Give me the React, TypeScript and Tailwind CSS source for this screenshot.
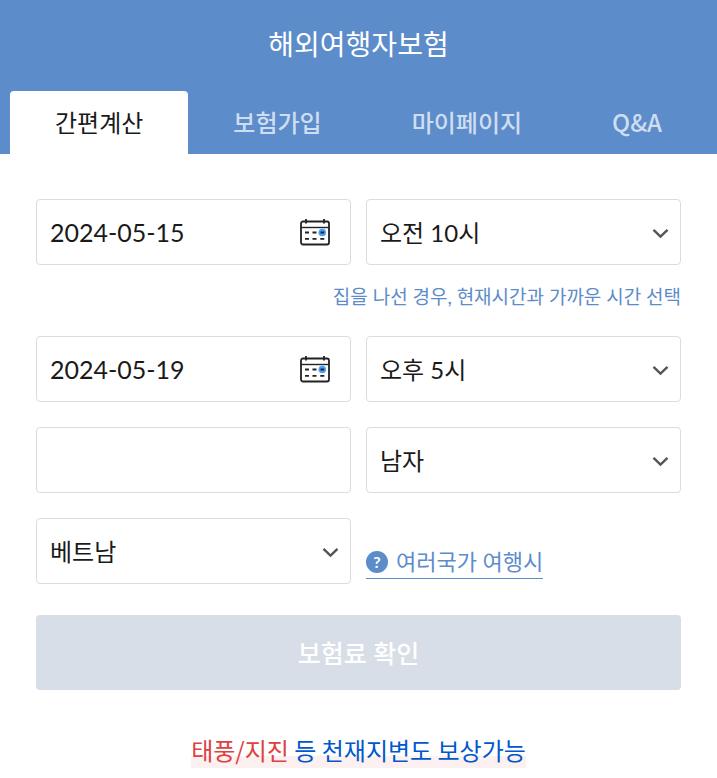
import React, { useState } from "react";

const tabs = ["간편계산", "보험가입", "마이페이지", "Q&A"];

const fieldClass =
  "block h-[66px] w-full appearance-none rounded border border-[#dcdcdc] bg-white pl-[13px] text-[#1a1a1a] outline-none";

const CalendarIcon = () => (
  <svg width="30" height="28" viewBox="0 0 30 28" fill="none">
    <circle cx="22.3" cy="14.5" r="3.8" fill="#45a0fb" />
    <rect x="1" y="3.5" width="28" height="23" rx="2" stroke="#222" strokeWidth="1.8" />
    <path d="M1 9.5h28" stroke="#222" strokeWidth="1.4" />
    <path d="M6 1v4.5M24 1v4.5" stroke="#222" strokeWidth="1.8" />
    <path
      d="M5 14.5h4M12.5 14.5h4M20.5 14.5h3.6M5 20.8h4M12.5 20.8h4M20.3 20.8h4"
      stroke="#222"
      strokeWidth="1.8"
    />
  </svg>
);

type DateFieldProps = { label: string; initial: string };

const DateField = ({ label, initial }: DateFieldProps) => {
  const [value, setValue] = useState(initial);
  return (
    <div className="relative">
      <input
        type="text"
        aria-label={label}
        className={`${fieldClass} text-[25px]`}
        value={value}
        onChange={(e) => setValue(e.target.value)}
      />
      <button
        type="button"
        aria-label={`${label} 달력`}
        className="absolute inset-y-0 right-[21px] flex items-center"
      >
        <CalendarIcon />
      </button>
    </div>
  );
};

type SelectFieldProps = { label: string; options: string[] };

const SelectField = ({ label, options }: SelectFieldProps) => (
  <div className="relative">
    <select aria-label={label} className={`${fieldClass} pt-0.5 text-2xl`}>
      {options.map((option) => (
        <option key={option}>{option}</option>
      ))}
    </select>
    <svg
      className="pointer-events-none absolute inset-y-0 right-3 my-auto"
      width="17"
      height="14"
      viewBox="0 0 17 14"
      fill="none"
    >
      <path d="M1.5 4.8L8.5 11.6L15.5 4.8" stroke="#555" strokeWidth="2.4" />
    </svg>
  </div>
);

const App = () => {
  const [birth, setBirth] = useState("");
  return (
    <div className="bg-white font-['Noto_Sans_CJK_KR',sans-serif]">
      <header className="bg-[#5c8cca]">
        <h1 className="pt-[23px] pb-7 text-center text-[28px] leading-10 text-white">
          해외여행자보험
        </h1>
        <nav className="flex px-2.5">
          {tabs.map((tab, index) => (
            <a
              key={tab}
              href="#"
              className={`flex h-[63px] flex-auto items-center justify-center rounded-t pb-0.5 text-2xl ${
                index === 0 ? "bg-white text-[#1a1a1a]" : "font-medium text-[#cfddf0]"
              }`}
            >
              {tab}
            </a>
          ))}
        </nav>
      </header>

      <form
        className="px-9 pt-[45px] font-['Lato','Noto_Sans_CJK_KR',sans-serif]"
        onSubmit={(e) => e.preventDefault()}
      >
        <div className="grid grid-cols-2 gap-x-[15px]">
          <DateField label="출발일" initial="2024-05-15" />
          <SelectField label="출발 시간" options={["오전 10시", "오전 11시"]} />
        </div>
        <p className="pt-4 pb-[23px] text-right text-[19px] leading-8 text-[#5c8cca]">
          집을 나선 경우, 현재시간과 가까운 시간 선택
        </p>
        <div className="grid grid-cols-2 gap-x-[15px] gap-y-[25px]">
          <DateField label="도착일" initial="2024-05-19" />
          <SelectField label="도착 시간" options={["오후 5시", "오후 6시"]} />
          <input
            type="text"
            aria-label="생년월일"
            className={`${fieldClass} text-2xl`}
            value={birth}
            onChange={(e) => setBirth(e.target.value)}
          />
          <SelectField label="성별" options={["남자", "여자"]} />
          <SelectField label="여행국가" options={["베트남", "일본"]} />
          <div className="flex items-end pb-[5px]">
            <a
              href="#"
              className="flex items-center gap-2 border-b border-[#5c8cca] text-[22px] leading-8 text-[#5c8cca]"
            >
              <span className="flex size-[22px] items-center justify-center rounded-full bg-[#5c8cca] text-base font-bold text-white">
                ?
              </span>
              여러국가 여행시
            </a>
          </div>
        </div>
        <button
          type="submit"
          className="mt-[31px] h-[75px] w-full rounded bg-[#d7dee8] pt-0.5 text-[25px] font-medium text-white"
        >
          보험료 확인
        </button>
      </form>

      <p className="pt-[43px] pb-2.5 text-center text-2xl leading-[33px] text-[#0058cc]">
        <span className="inline-block bg-linear-to-b from-transparent from-65% to-[#fcf0f0] to-65% pb-0.5">
          <span className="text-[#e04040]">태풍/지진</span> 등 천재지변도 보상가능
        </span>
      </p>
    </div>
  );
};

export default App;
